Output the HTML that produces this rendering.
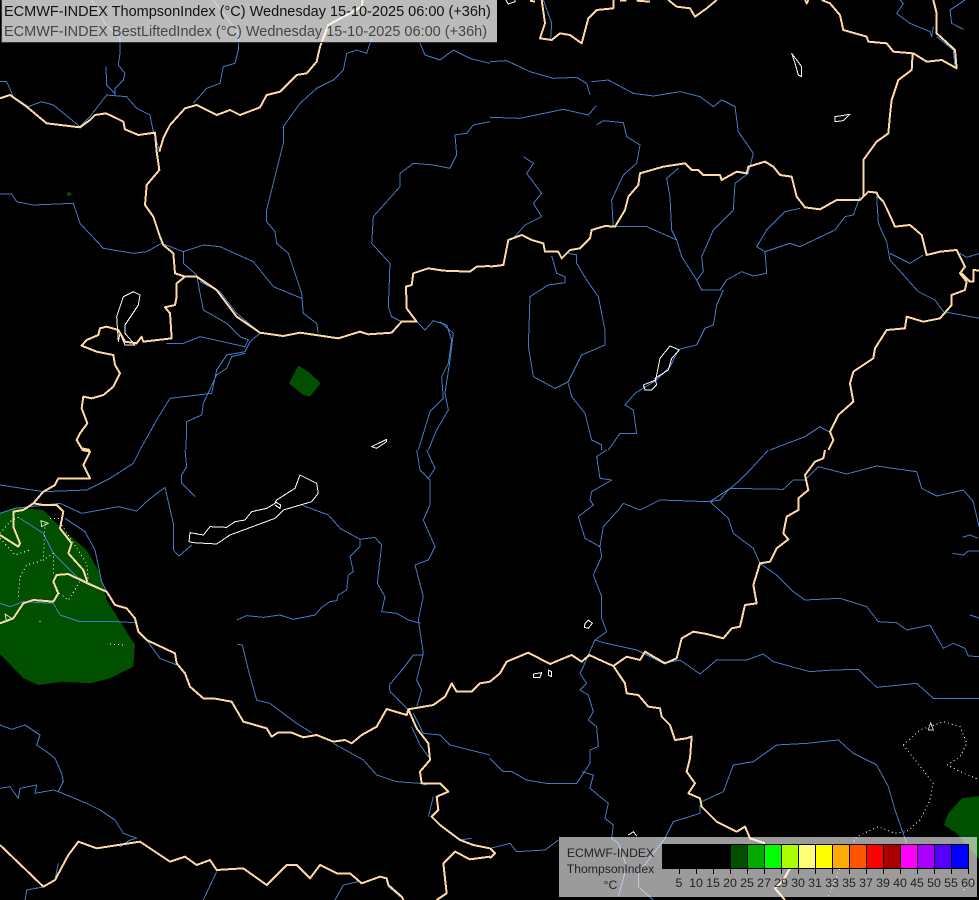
<!DOCTYPE html>
<html lang="en"><head><meta charset="utf-8"><title>ECMWF-INDEX ThompsonIndex</title>
<style>
html,body{margin:0;padding:0;background:#000;width:979px;height:900px;overflow:hidden}
#m{position:absolute;left:0;top:0}
path{fill:none;vector-effect:non-scaling-stroke;stroke-linejoin:round}
.r path{stroke:#3f7dc4;stroke-width:1}
.b path{stroke:#ffd9a3;stroke-width:2}
.w path{stroke:#fff;stroke-width:1}
.d path{stroke:#fff;stroke-width:1;stroke-dasharray:1 3}
.g path{fill:#005000;stroke:none}
.o{position:absolute;mix-blend-mode:screen}
.t{position:absolute;font-family:"Liberation Sans",sans-serif;white-space:nowrap;line-height:16px}
.s{position:absolute;top:844px;width:16px;height:23px;border:1px solid #000;box-sizing:content-box}
.k{position:absolute;top:868px;width:1px;height:6px;background:#000}
.l{position:absolute;top:875px;width:30px;margin-left:-15px;text-align:center;font:12.4px/16px "Liberation Sans",sans-serif;color:#222}
</style></head><body>
<svg id="m" width="979" height="900" viewBox="0 0 979 900" shape-rendering="crispEdges" xmlns="http://www.w3.org/2000/svg">
<g transform="scale(.33333)" class="g"><path d="M895 1097 925 1115 962 1150 930 1190 910 1185 867 1150Z"/><path d="M205 575 217 582 205 590 200 582Z"/></g>
<g transform="translate(0,450) scale(.33333)" class="g"><path d="M0 190 45 172 130 180 190 240 260 300 300 370 320 450 405 585 400 650 330 685 270 700 190 695 115 705 70 685 0 612Z"/></g>
<g transform="translate(490,450) scale(.33333)" class="g"><path d="M1470 1038 1415 1045 1375 1090 1362 1125 1400 1150 1470 1230Z"/></g>

<g transform="scale(.33333)">
<g class="r">
<path d="M275 0 315 70 360 115 360 160 355 195 375 220 370 240 345 265 345 285"/>
<path d="M318 200 320 255 345 280"/>
<path d="M640 0 715 100 715 150 705 190 670 200 660 250 620 265 580 310"/>
<path d="M1470 365 1420 375 1400 400 1365 405 1370 465 1350 505 1300 495 1240 490 1200 520 1200 560 1120 650 1115 730 1170 790 1165 920 1175 950 1205 965"/>
<path d="M1115 115 1100 160 1070 150 1040 160 1030 210 1000 240 950 265 900 310 850 380 850 430 830 510 800 630 800 665 825 695 830 730 865 760 905 880 910 940 950 970 955 998"/>
<path d="M1260 130 1275 165 1320 180 1360 150 1410 175 1470 190"/>
<path d="M0 245 20 245 40 290 85 320 125 305 160 315 240 380 270 350 320 285 380 290 410 325 450 345 460 395 480 455"/>
<path d="M0 582 35 582 50 605 100 615 220 610 240 670 310 745 400 760 440 755 485 730 550 755 610 735 660 740 760 785 820 860 905 895"/>
<path d="M550 755 550 790 590 825 600 880 610 930 680 970 720 1010 745 1020 735 1040 600 1010 550 1030 500 1030"/>
<path d="M600 845 660 875 710 940 780 998"/>
<path d="M780 1000 750 1025 735 1055 680 1065 650 1110 635 1180 510 1195 470 1260 420 1350"/>
<path d="M735 1060 695 1070 680 1105 650 1125 610 1210 605 1245 560 1265 558 1350"/>
<path d="M1250 965 1275 990 1300 962 1340 975 1355 1020 1345 1090 1325 1130 1330 1195 1290 1235 1255 1350"/>
<path d="M1320 965 1360 1000 1350 1080 1335 1180 1345 1230 1310 1290 1285 1350"/>
</g>
<g class="w">
<path d="M355 1025 350 950 370 890 400 875 420 885 415 915 375 975 375 1000 405 1035 375 1035 360 1000Z"/>
<path d="M1115 1340 1160 1318 1160 1325 1130 1345Z"/>
</g>
<g class="b">
<path d="M0 295 30 285 80 320 140 370 240 382 270 360 285 345 318 340 350 355 370 365 375 388 415 405 465 398 470 455 478 510 440 555 435 615 460 650 480 710 490 735 520 760 525 820 555 830 590 830 650 870 710 950 780 998 850 1008 900 998 1015 1015 1080 995 1105 1003 1175 998 1205 965 1250 965 1220 925 1218 860 1235 855 1240 820 1285 805 1330 812 1410 815 1430 800 1470 798"/>
<path d="M478 455 490 415 510 375 555 325 590 315 650 345 690 330 720 345 780 322 800 285 840 275 890 225 920 220 950 185 960 140 985 75 1040 45 1085 20 1088 0"/>
<path d="M555 830 530 850 530 890 525 915 495 922 510 940 515 1015 430 1025 425 1010 410 1030 375 1025 355 990 320 980 300 985 295 1005 260 1020 245 1037 290 1055 340 1065 345 1095 360 1120 340 1160 310 1185 275 1195 250 1190 245 1225 262 1270 240 1300 230 1320 245 1345 270 1350"/>
</g>
</g>

<g transform="translate(490,0) scale(.33333)">
<g class="r">
<path d="M160 0 185 70 182 115"/>
<path d="M0 185 50 182 120 215 190 235 260 232 290 250 300 285"/>
<path d="M305 245 355 240 430 280 490 288 570 275 630 290 670 320 695 300 735 320 745 395 790 460 775 520 735 550 730 630 670 690 635 770 640 815 620 840 635 870 690 870 710 840 755 815 790 828 830 820 825 755 800 740 830 690 885 635 930 625"/>
<path d="M0 352 90 355 220 328 295 345 318 318"/>
<path d="M320 375 340 362 400 368 410 410 450 435 440 490 400 525 365 600 370 680"/>
<path d="M100 470 130 490 110 520 155 580 130 610 155 650 105 675 75 710"/>
<path d="M375 680 470 680 560 720 575 770 620 840"/>
<path d="M565 505 530 535 540 590 545 690 560 720"/>
<path d="M185 768 200 820 225 830 225 848 175 855 120 890 115 1040 130 1130 195 1165 235 1145 275 1065 345 1035 345 990 325 890 290 840 260 790 260 765 235 760"/>
<path d="M235 1150 245 1190 285 1240 305 1320 335 1335 335 1350"/>
<path d="M355 1350 390 1300 440 1300 430 1230 405 1215 435 1180 500 1140 540 1100 565 1050"/>
<path d="M570 1047 620 1035 645 985 670 975 680 915 700 870"/>
<path d="M825 755 900 730 930 740 1035 690 1065 650 1090 645 1110 590"/>
<path d="M1160 590 1165 670 1190 725 1200 780 1285 875 1335 900 1360 935 1470 955"/>
<path d="M1200 760 1260 790 1300 765"/>
<path d="M1410 760 1430 772 1470 760"/>
<path d="M1230 0 1240 10 1220 40 1260 70 1320 95 1325 110 1330 80"/>
<path d="M1425 0 1380 30 1385 70 1420 88"/>
<path d="M840 1350 945 1310 990 1280 1025 1300"/>
<path d="M1340 110 1390 150 1395 200"/>
</g>
<g class="w">
<path d="M905 160 935 200 935 230 925 225 915 190Z"/>
<path d="M1035 350 1080 343 1060 362 1035 365Z"/>
<path d="M540 1038 510 1075 497 1140 460 1155 465 1170 485 1170 500 1155 495 1135 535 1110 545 1075 568 1050Z"/>
<path d="M47 0 55 12 75 5 75 0"/>
</g>
<g class="b">
<path d="M1015 1350 1030 1320 1020 1295 1045 1245 1090 1205 1080 1150 1090 1115 1150 1075 1155 1045 1190 990 1245 985 1250 950 1300 965 1350 955 1385 915 1385 885 1425 870 1430 845 1410 820 1425 800 1400 750 1350 755 1310 765 1295 705 1260 675 1215 680 1190 625 1180 605 1165 590 1160 578 1135 575 1110 600 1040 600 990 628 945 622 920 590 905 530 870 525 850 500 825 485 775 500 770 520 740 515 695 540 690 525 640 525 625 510 605 510 585 490 520 500 450 520 445 555 415 590 405 630 375 680 345 678 305 690 300 715 270 745 240 750 215 775 205 755 165 755 160 730 125 720 95 705 55 720 40 795 0 800"/>
<path d="M1120 590 1120 480 1160 425 1195 400 1200 345 1205 300 1225 240 1265 210 1268 160 1210 155 1190 130 1135 125 1130 110 1060 90 1050 45 1020 10 995 0"/>
<path d="M1270 160 1310 185 1355 180 1400 205 1395 150 1340 100 1340 40 1330 0"/>
<path d="M155 0 165 70 150 115 185 120 210 100 240 105 275 130 295 55 320 30 370 25 370 0"/>
<path d="M535 0 560 20 600 25 615 50 650 25 680 0"/>
<path d="M390 2 410 2"/><path d="M440 2 480 5"/><path d="M945 0 950 10 955 0"/><path d="M120 2 135 5"/>
<path d="M1415 820 1440 845 1450 845 1450 810 1470 812"/>
</g>
</g>

<g transform="translate(0,450) scale(.33333)">
<g class="r">
<path d="M0 105 130 125 260 120 330 85 400 40 420 0"/>
<path d="M0 190 45 175 180 160 245 190 355 170 410 183 445 150 495 112 520 220 520 300 537 318 575 285"/>
<path d="M555 0 560 50 545 75 545 100 585 140"/>
<path d="M195 205 255 245 285 300 305 395 320 425"/>
<path d="M60 205 130 250 160 310 230 380 290 410"/>
<path d="M0 460 30 470 70 455 160 460 180 495 240 515 350 515 405 518"/>
<path d="M440 570 480 625 530 645"/>
<path d="M1250 0 1260 60 1290 90 1290 165 1270 210 1305 290 1285 330 1245 345 1270 440 1255 510 1270 610 1250 690 1265 720 1250 770"/>
<path d="M1280 0 1305 55 1285 85"/>
<path d="M905 165 985 195 1020 235 1080 268 1125 262 1145 285 1132 400 1155 440 1145 485 1190 490 1225 510 1262 520"/>
<path d="M1080 270 1080 290 1050 320 1060 365 1045 375 1040 420 1015 435 1010 452 990 455 965 472 945 495 880 508 840 495 790 502 740 497 710 510"/>
<path d="M712 583 727 585 745 660 770 750 810 760 890 820 935 848"/>
<path d="M1270 615 1240 615 1210 655 1168 705 1170 725 1225 780"/>
<path d="M1000 880 1090 930 1130 975 1190 995 1260 1000 1280 1005"/>
<path d="M1240 790 1270 850 1320 855 1350 885 1470 915"/>
<path d="M1235 830 1260 885 1285 920"/>
<path d="M0 825 35 838 75 825 120 855 110 885 140 905 165 925 185 970 190 995 175 1025"/>
<path d="M0 1015 30 1010 55 1045 60 1015 110 1005 105 1030 160 1020 175 1025 260 1060 300 1080 345 1110 370 1150 410 1165 390 1170 360 1190"/>
<path d="M1300 1040 1285 1100"/>
<path d="M1320 1125 1380 1170 1415 1165"/>
<path d="M75 1350 80 1320 135 1310"/><path d="M175 1240 165 1290"/><path d="M610 1350 650 1265"/><path d="M1005 1350 1030 1305 1075 1295"/><path d="M1165 1310 1200 1340"/>
</g>
<g class="d">
<path d="M0 250 30 215 60 200"/>
<path d="M0 265 45 315 90 300"/>
<path d="M135 220 130 330 160 310 160 370"/>
<path d="M55 440 60 380 80 345 115 335 130 325"/>
<path d="M150 205 185 205"/>
<path d="M185 225 260 340 265 390"/>
<path d="M240 395 205 450 165 420"/>
<path d="M120 513 122 524"/>
<path d="M330 582 370 585"/>
</g>
<g class="w">
<path d="M567 275 570 248 610 255 630 230 680 232 705 215 735 210 755 185 800 175 825 160 830 150 885 115 900 75 950 100 955 130 935 155 850 180 825 205 690 255 650 282 580 278Z"/>
<path d="M825 155 842 165 840 175 825 165"/>
<path d="M123 212 145 220 125 230Z" style="stroke:#cfe0cf"/>
<path d="M15 492 35 505 20 515Z" style="stroke:#cfe0cf"/>
</g>
<g class="b">
<path d="M245 0 270 5 250 45 270 85 175 85 165 105 130 125 100 160 70 180 40 185 40 230 60 280 55 290 0 255"/>
<path d="M100 160 130 165 170 165 190 185 180 235 215 280 205 310 250 360 262 395"/>
<path d="M0 520 40 505 70 460 100 450 160 455 175 430 160 395 170 375 205 372 262 400 320 425 345 465 380 475 405 505 415 545 440 570 525 610 530 640 555 670 570 710 610 745 640 745 695 755 730 815 800 835 815 860 835 847 875 848 910 862 950 855 1000 875 1035 870 1055 880 1085 855 1130 830 1160 777 1220 795 1225 778 1300 765 1335 740 1355 700 1370 725 1415 725 1440 700 1470 695"/>
<path d="M0 1185 130 1310 165 1290 205 1215 235 1175 290 1195 420 1175 510 1235 555 1220 590 1245 630 1230 650 1260 730 1255 800 1305 860 1245 890 1245 930 1285 960 1245 1010 1270 1050 1270 1085 1300 1140 1280 1160 1285 1165 1305 1205 1340 1210 1350"/>
<path d="M1225 778 1250 835 1285 880 1290 930 1260 965 1265 1000 1320 1000 1345 1025 1310 1040 1315 1080 1295 1100 1320 1125 1380 1170 1420 1185 1470 1195"/>
<path d="M1310 1350 1340 1330 1330 1240 1365 1205 1410 1228 1470 1220"/>
</g>
</g>

<g transform="translate(490,450) scale(.33333)">
<g class="r">
<path d="M350 0 320 20 330 85 365 90 305 125 300 150 310 165 265 200 285 265 330 290 335 320 310 375 335 440 335 505 350 545 315 570 295 615 280 650 270 670 290 700 270 720 295 735 310 785 295 810 320 830 325 890 300 900 300 940 260 1000 170 1000 110 990 65 965 40 965 0 925"/>
<path d="M275 965 310 975 300 1015 355 1060 345 1105 370 1125 365 1165 385 1180 410 1250 385 1340"/>
<path d="M315 570 340 578 440 600 520 640 570 630 630 672 680 630 770 630 820 612 850 635 960 665 1030 660 1105 658 1160 712 1280 700 1330 745 1470 745"/>
<path d="M510 150 660 155 720 115 880 118 910 90 945 90 985 50 1070 72 1160 48 1280 65 1295 115 1340 138 1420 120 1450 155 1460 200 1470 240"/>
<path d="M835 0 780 60 745 95 715 120 690 150 660 155"/>
<path d="M510 150 450 180 400 160 385 180 340 230 330 290"/>
<path d="M660 155 715 205 730 250 790 295 810 340 860 375 910 425 945 450 1050 445 1130 470 1165 515 1220 518 1250 540 1320 525 1360 595 1390 580 1425 595 1435 618 1470 620"/>
<path d="M1417 262 1440 255 1465 265"/>
<path d="M1387 310 1420 315 1435 303 1470 303"/>
<path d="M1440 495 1470 505"/>
<path d="M635 1055 700 1025 730 945 790 935 860 885 950 880 1045 870 1090 910 1160 945 1195 1010 1215 1080 1250 1180"/>
<path d="M0 1195 60 1180 80 1205 165 1200 205 1170"/>
<path d="M630 1065 630 1090 550 1115 525 1165 445 1270 445 1310 490 1350"/>
</g>
<g class="d">
<path d="M1240 885 1290 840 1360 815 1410 830 1430 880 1410 920 1372 945 1410 965 1470 990"/>
<path d="M1240 885 1330 1000 1320 1050 1290 1110 1250 1145 1215 1150 1165 1130 1100 1160 1060 1230 1015 1340"/>
<path d="M1420 1320 1450 1290"/>
</g>
<g class="w">
<path d="M285 520 295 510 307 520 295 535 283 532Z"/>
<path d="M130 672 155 668 150 682 130 682Z"/>
<path d="M175 660 185 665 185 680 175 675Z"/>
<path d="M415 1155 430 1145 440 1158"/>
<path d="M1315 840 1322 818 1330 840Z" style="stroke:#ccc"/>
</g>
<g class="b">
<path d="M0 695 30 670 50 635 115 608 180 642 245 615 275 635 298 615 330 630 370 648 410 620 450 630 465 605 525 640 560 625 575 565 610 545 650 552 700 565 725 535 750 530 765 465 800 460 790 405 810 340 840 335 860 295 895 268 880 250 890 200 925 180 925 145 955 120 945 75 975 35 1000 25 1005 0"/>
<path d="M370 648 405 700 410 730 445 735 475 770 510 775 515 800 540 825 555 870 590 865 605 860 600 925 590 965 615 1000 595 1030 630 1045 635 1070 680 1115 740 1145 765 1130 780 1165 825 1180"/>
<path d="M900 1255 880 1290 855 1315 885 1350"/>
<path d="M0 1195 15 1210 0 1225"/>
</g>
</g>
</svg>

<div class="o" style="left:1px;top:0;width:496px;height:42px;background:#bbb"></div>
<div style="position:absolute;left:1px;top:0;width:1px;height:43px;background:#333"></div>
<div style="position:absolute;left:1px;top:42px;width:496px;height:1px;background:#333"></div>
<div class="t" style="left:4px;top:4px;font-size:14.5px;color:#111">ECMWF-INDEX ThompsonIndex (°C) Wednesday 15-10-2025 06:00 (+36h)</div>
<div class="t" style="left:4px;top:24px;font-size:14.5px;color:#444">ECMWF-INDEX BestLiftedIndex (°C) Wednesday 15-10-2025 06:00 (+36h)</div>

<div class="o" style="left:559px;top:837px;width:418px;height:60px;background:#9b9b9b"></div>
<div class="t" style="left:559px;width:103px;text-align:center;top:845px;font-size:12.2px;color:#222">ECMWF-INDEX</div>
<div class="t" style="left:559px;width:103px;text-align:center;top:861px;font-size:12.2px;color:#222">ThompsonIndex</div>
<div class="t" style="left:559px;width:103px;text-align:center;top:877px;font-size:12.2px;color:#222">°C</div>

<div class="s" style="left:662px;background:#000"></div>
<div class="s" style="left:679px;background:#000"></div>
<div class="s" style="left:696px;background:#000"></div>
<div class="s" style="left:713px;background:#000"></div>
<div class="s" style="left:730px;background:#005000"></div>
<div class="s" style="left:747px;background:#00aa00"></div>
<div class="s" style="left:764px;background:#00ff00"></div>
<div class="s" style="left:781px;background:#aaff00"></div>
<div class="s" style="left:798px;background:#ffff77"></div>
<div class="s" style="left:815px;background:#ffff00"></div>
<div class="s" style="left:832px;background:#ffaa00"></div>
<div class="s" style="left:849px;background:#ff5500"></div>
<div class="s" style="left:866px;background:#ff0000"></div>
<div class="s" style="left:883px;background:#aa0000"></div>
<div class="s" style="left:900px;background:#ff00ff"></div>
<div class="s" style="left:917px;background:#aa00ff"></div>
<div class="s" style="left:934px;background:#5500ff"></div>
<div class="s" style="left:951px;background:#0000ff"></div>

<div class="k" style="left:679px"></div><div class="k" style="left:696px"></div><div class="k" style="left:713px"></div><div class="k" style="left:730px"></div><div class="k" style="left:747px"></div><div class="k" style="left:764px"></div><div class="k" style="left:781px"></div><div class="k" style="left:798px"></div><div class="k" style="left:815px"></div><div class="k" style="left:832px"></div><div class="k" style="left:849px"></div><div class="k" style="left:866px"></div><div class="k" style="left:883px"></div><div class="k" style="left:900px"></div><div class="k" style="left:917px"></div><div class="k" style="left:934px"></div><div class="k" style="left:951px"></div><div class="k" style="left:968px"></div>

<div class="l" style="left:679px">5</div><div class="l" style="left:696px">10</div><div class="l" style="left:713px">15</div><div class="l" style="left:730px">20</div><div class="l" style="left:747px">25</div><div class="l" style="left:764px">27</div><div class="l" style="left:781px">29</div><div class="l" style="left:798px">30</div><div class="l" style="left:815px">31</div><div class="l" style="left:832px">33</div><div class="l" style="left:849px">35</div><div class="l" style="left:866px">37</div><div class="l" style="left:883px">39</div><div class="l" style="left:900px">40</div><div class="l" style="left:917px">45</div><div class="l" style="left:934px">50</div><div class="l" style="left:951px">55</div><div class="l" style="left:968px">60</div>
</body></html>
